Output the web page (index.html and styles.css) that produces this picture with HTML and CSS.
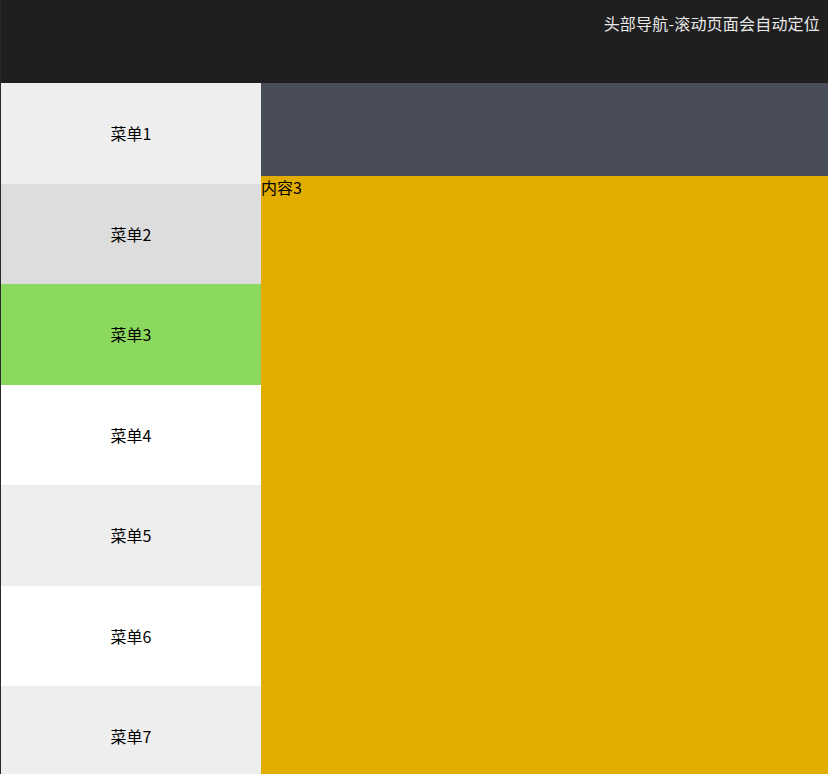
FILE: index.html
```html
<!DOCTYPE html>
<html lang="zh">
<head>
<meta charset="utf-8">
<title>头部导航</title>
<link rel="stylesheet" href="styles.css">
</head>
<body>
<header class="top">
  <div class="top-title">头部导航-滚动页面会自动定位</div>
</header>
<div class="main">
  <nav class="menu">
    <div class="menu-item light">菜单1</div>
    <div class="menu-item mid">菜单2</div>
    <div class="menu-item active">菜单3</div>
    <div class="menu-item white">菜单4</div>
    <div class="menu-item light">菜单5</div>
    <div class="menu-item white">菜单6</div>
    <div class="menu-item light">菜单7</div>
  </nav>
  <section class="content">
    <div class="content-prev"></div>
    <div class="content-block">内容3</div>
  </section>
</div>
</body>
</html>
```
FILE: styles.css
```css
html, body {
  margin: 0;
  padding: 0;
  height: 100%;
  overflow: hidden;
}
body {
  background: #2a2a2a;
  padding-left: 1px;
  box-sizing: border-box;
  font-family: "Noto Sans CJK SC", "Noto Sans", sans-serif;
  font-size: 16px;
  color: #000;
}
.top {
  height: 83px;
  background: #1f1f1f;
  display: flex;
  justify-content: flex-end;
  align-items: flex-start;
  padding: 11px 8px 0 0;
  box-sizing: border-box;
}
.top-title {
  color: #e8e8e8;
  font-size: 16px;
  line-height: 24px;
  letter-spacing: 0.2px;
}
.main {
  display: flex;
  height: calc(100% - 83px);
}
.menu {
  width: 260px;
  flex: none;
  display: flex;
  flex-direction: column;
}
.menu-item {
  height: 100.5px;
  flex: none;
  display: flex;
  align-items: center;
  justify-content: center;
  font-size: 16px;
}
.light { background: #eeeeee; }
.mid { background: #dddddd; }
.white { background: #ffffff; }
.active { background: #8cd95f; }
.content {
  flex: 1;
  display: flex;
  flex-direction: column;
}
.content-prev {
  height: 93px;
  background: #484c58;
  flex: none;
}
.content-block {
  flex: 1;
  background: #e2ad00;
  line-height: 22px;
  font-size: 16px;
}
```
